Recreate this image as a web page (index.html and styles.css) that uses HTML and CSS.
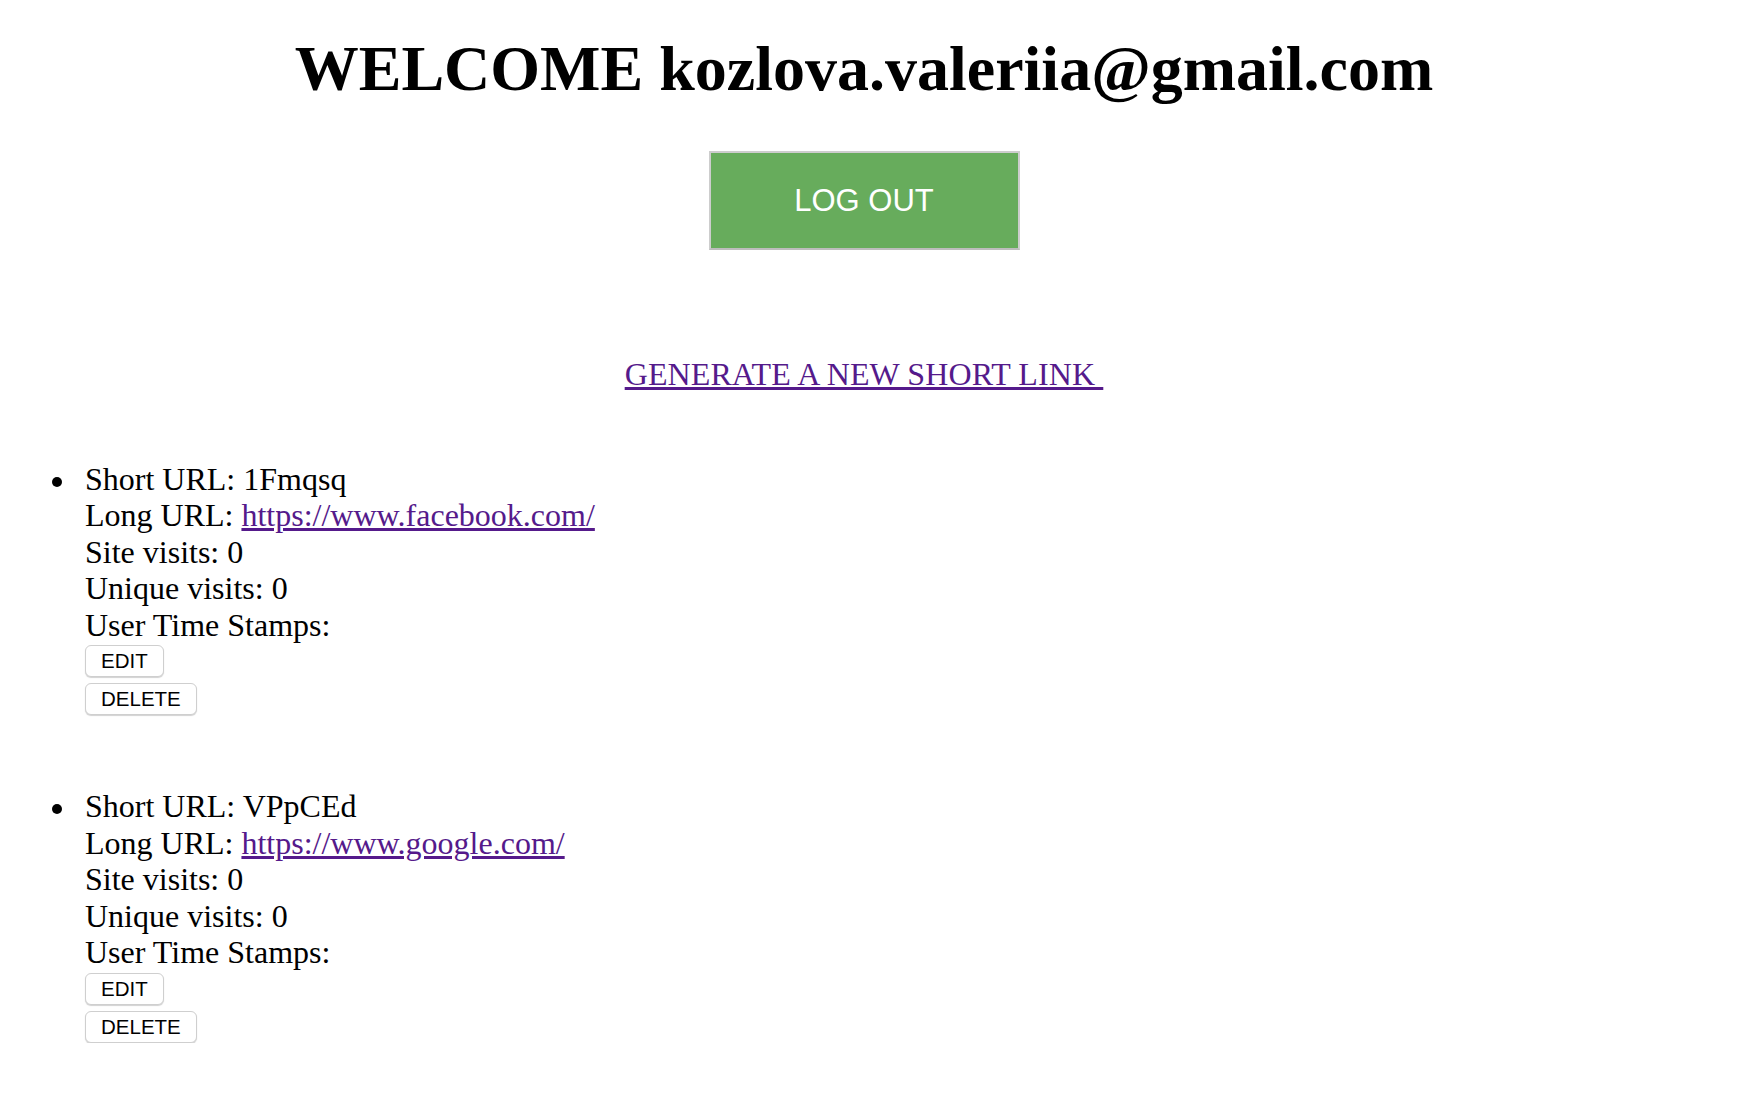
FILE: index.html
```html
<!DOCTYPE html>
<html lang="en">
<head>
<meta charset="utf-8">
<title>Short links</title>
<link rel="stylesheet" href="styles.css">
</head>
<body>
<main class="page">
  <h1 class="title">WELCOME kozlova.valeriia@gmail.com</h1>
  <div class="logout-row">
    <button class="logout-btn" type="button">LOG OUT</button>
  </div>
  <div class="generate-row">
    <a class="generate-link" href="#">GENERATE A NEW SHORT LINK&nbsp;</a>
  </div>
  <ul class="link-list">
    <li class="link-item">
      <span class="bullet" aria-hidden="true"></span>
      <div class="item-body">
        <div class="info">
          Short URL: 1Fmqsq<br>
          Long URL: <a class="long-link" href="#">https://www.facebook.com/</a><br>
          Site visits: 0<br>
          Unique visits: 0<br>
          User Time Stamps:
        </div>
        <div class="item-actions">
          <button class="small-btn" type="button">EDIT</button>
          <button class="small-btn" type="button">DELETE</button>
        </div>
      </div>
    </li>
    <li class="link-item">
      <span class="bullet" aria-hidden="true"></span>
      <div class="item-body">
        <div class="info">
          Short URL: VPpCEd<br>
          Long URL: <a class="long-link" href="#">https://www.google.com/</a><br>
          Site visits: 0<br>
          Unique visits: 0<br>
          User Time Stamps:
        </div>
        <div class="item-actions">
          <button class="small-btn" type="button">EDIT</button>
          <button class="small-btn" type="button">DELETE</button>
        </div>
      </div>
    </li>
  </ul>
</main>
</body>
</html>
```

FILE: styles.css
```css
html, body {
  margin: 0;
  padding: 0;
  background: #ffffff;
}

body {
  font-family: "Liberation Serif", "Times New Roman", serif;
  color: #000000;
}

.page {
  padding: 0 28px 0 16px;
}

.title {
  margin: 32px 0 0;
  font-size: 64px;
  line-height: 74px;
  font-weight: bold;
  text-align: center;
}

.logout-row {
  display: flex;
  justify-content: center;
  margin-top: 45px;
}

.logout-btn {
  box-sizing: border-box;
  width: 311px;
  height: 99px;
  background: #67ac5c;
  border: 2px solid #cdcdcd;
  border-bottom-color: #bdbdbd;
  color: #ffffff;
  font-family: "Liberation Sans", Arial, sans-serif;
  font-size: 31px;
  padding: 0;
  cursor: pointer;
}

.generate-row {
  margin-top: 106px;
  text-align: center;
  font-size: 32px;
  line-height: 36.5px;
}

.generate-link {
  letter-spacing: 0.1px;
}

.generate-link,
.long-link {
  color: #551a8b;
  text-decoration: underline;
}

.link-list {
  list-style: none;
  margin: 68px 0 0;
  padding: 0;
  display: flex;
  flex-direction: column;
  gap: 73px;
}

.link-item {
  display: flex;
  align-items: flex-start;
  font-size: 32px;
  line-height: 36.5px;
}

.bullet {
  flex: none;
  width: 10px;
  height: 10px;
  margin: 16px 23px 0 36px;
  border-radius: 50%;
  background: #000000;
}

.item-actions {
  display: flex;
  flex-direction: column;
  align-items: flex-start;
  gap: 6px;
  margin-top: 2px;
}

.small-btn {
  box-sizing: border-box;
  height: 32px;
  padding: 0 15px;
  background: #ffffff;
  border: 1px solid #cfcfcf;
  border-radius: 6px;
  box-shadow: 0 1px 1px rgba(0, 0, 0, 0.18);
  font-family: "Liberation Sans", Arial, sans-serif;
  font-size: 20.5px;
  line-height: 30px;
  color: #000000;
  cursor: pointer;
}
```
